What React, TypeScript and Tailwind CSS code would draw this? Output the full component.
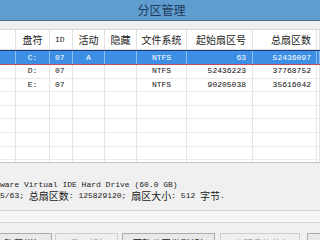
import React from "react";

// mixed CJK / latin text: CJK a bit larger, latin in a mono face like the bitmap font
const CJK_RE = /([\u3000-\u9fff\uff00-\uffef]+)/;

function Mixed({ text, cjk = "text-[10px]", lat = "text-[8px]" }: { text: string; cjk?: string; lat?: string }) {
  const parts = text.split(CJK_RE).filter((p) => p !== "");
  return (
    <>
      {parts.map((p, i) =>
        CJK_RE.test(p) ? (
          <span key={i} className={`${cjk} font-['Noto_Sans_CJK_SC',sans-serif]`}>
            {p}
          </span>
        ) : (
          <span key={i} className={`${lat} font-['Liberation_Mono',monospace] whitespace-pre`}>
            {p}
          </span>
        )
      )}
    </>
  );
}

const colCls = [
  "w-[16px]",
  "w-[34px] justify-center",
  "w-[23px] justify-start pl-[5px]",
  "w-[32px] justify-center",
  "w-[32px] justify-center",
  "w-[50px] justify-center",
  "w-[66px] justify-end pr-[6px]",
  "w-[64px] justify-end pr-[5px]",
  "flex-1",
];

const headers = ["", "盘符", "ID", "活动", "隐藏", "文件系统", "起始扇区号", "总扇区数", ""];

const rows = [
  ["", "D:", "07", "", "", "NTFS", "52436223", "37768752", ""],
  ["", "E:", "07", "", "", "NTFS", "90205038", "35616042", ""],
  ["", "", "", "", "", "", "", "", ""],
  ["", "", "", "", "", "", "", "", ""],
  ["", "", "", "", "", "", "", "", ""],
  ["", "", "", "", "", "", "", "", ""],
  ["", "", "", "", "", "", "", "", ""],
  ["", "", "", "", "", "", "", "", ""],
];

const selected = ["", "C:", "07", "A", "", "NTFS", "63", "52436097", ""];

function Cell({ i, text, sep }: { i: number; text: string; sep: string }) {
  return (
    <div className={`flex items-center h-full shrink-0 border-r ${sep} ${colCls[i]}`}>
      {text && <Mixed text={text} />}
    </div>
  );
}

export default function App() {
  return (
    <div className="w-[320px] h-[240px] overflow-hidden flex flex-col bg-[#f0f0f0] text-[#111]">
      {/* title bar */}
      <div className="h-[21px] shrink-0 bg-[#5f9dcf] border-b border-[#4b6f8f] flex items-center justify-center">
        <span className="text-[12px] leading-none text-[#1d3a5c] font-['Noto_Sans_CJK_SC',sans-serif] ml-[3px]">
          分区管理
        </span>
      </div>
      <div className="h-[8px] shrink-0 bg-[#efeff2]" />

      {/* partition table */}
      <div className="shrink-0 h-[134px] bg-white border-t border-[#d9d9d9] border-b border-b-[#c4c4c4] overflow-hidden">
        <div className="flex h-[20px] border-b border-[#e2e2e2] text-[#222]">
          {headers.map((h, i) => (
            <Cell key={i} i={i} text={h} sep="border-[#e2e2e2]" />
          ))}
        </div>
        <div className="flex h-[15px] bg-[#3d8fe6] text-white border-t border-[#23387a] border-b border-b-[#c04a5a]">
          {selected.map((c, i) => (
            <Cell key={i} i={i} text={c} sep="border-[#8dbff2]" />
          ))}
        </div>
        {rows.map((r, ri) => (
          <div key={ri} className="flex h-[13.6px] border-b border-[#ebebeb]">
            {r.map((c, i) => (
              <Cell key={i} i={i} text={c} sep="border-[#e6e6e6]" />
            ))}
          </div>
        ))}
      </div>

      {/* disk info */}
      <div className="shrink-0 pt-[17px] flex flex-col leading-[10px] text-[#1a1a1a]">
        <div className="h-[10px] flex items-center whitespace-nowrap">
          <Mixed text="ware Virtual IDE Hard Drive (60.0 GB)" />
        </div>
        <div className="h-[10px] flex items-center whitespace-nowrap mt-[1px]">
          <Mixed text="5/63; 总扇区数: 125829120; 扇区大小: 512 字节." />
        </div>
      </div>

      <div className="shrink-0 mt-[9px] h-[13px] border-t border-b border-[#d6d6d6] bg-[#f5f5f5]" />

      {/* buttons */}
      <div className="flex mt-[10px] shrink-0">
        <button className="-ml-[10px] w-[62px] h-[18px] shrink-0 border border-[#adadad] bg-[#e9e9e9] flex items-start justify-center pt-[2px] text-[#111]">
          <Mixed text="隐藏(H)" cjk="text-[9.5px]" />
        </button>
        <button className="ml-[3px] w-[63px] h-[18px] shrink-0 border border-[#cfcfcf] bg-[#efefef] flex items-start justify-center pt-[2px] text-[#9a9a9a]">
          <Mixed text="显示(S)" cjk="text-[9.5px]" />
        </button>
        <button className="ml-[4px] w-[93px] h-[18px] shrink-0 border border-[#adadad] bg-[#e9e9e9] flex items-start justify-center pt-[2px] text-[#111]">
          <Mixed text="更改分区类型(T)" cjk="text-[9.5px]" />
        </button>
        <button className="ml-[5px] w-[80px] h-[18px] shrink-0 border border-[#cfcfcf] bg-[#efefef] flex items-start justify-center pt-[2px] text-[#9a9a9a]">
          <Mixed text="分配盘符(L)" cjk="text-[9.5px]" />
        </button>
        <button className="ml-[7px] w-[60px] h-[18px] shrink-0 border border-[#adadad] bg-[#e9e9e9]" />
      </div>
    </div>
  );
}
